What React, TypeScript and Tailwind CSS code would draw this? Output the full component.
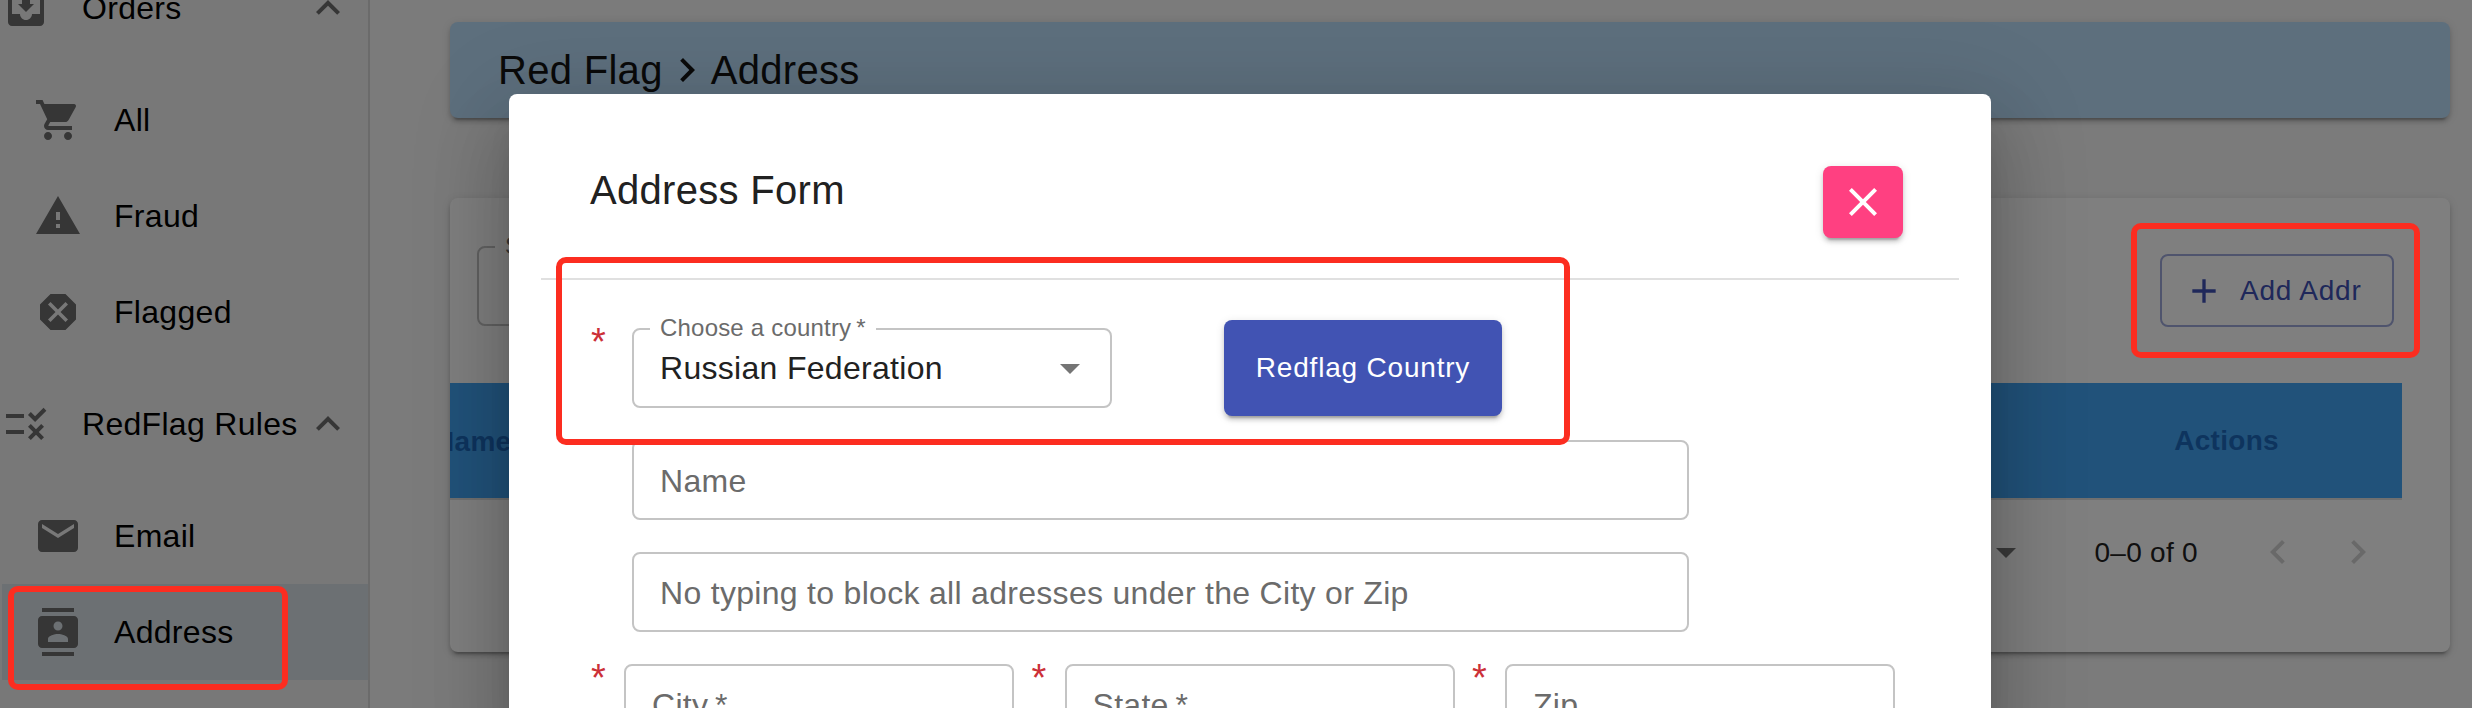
import type { ReactNode } from "react";
import type { IconType } from "react-icons";
import {
  MdAdd,
  MdArrowDropDown,
  MdClose,
  MdContacts,
  MdDangerous,
  MdEmail,
  MdExpandLess,
  MdKeyboardArrowLeft,
  MdKeyboardArrowRight,
  MdMoveToInbox,
  MdNavigateNext,
  MdRule,
  MdShoppingCart,
  MdWarning,
} from "react-icons/md";

const elevation =
  "shadow-[0_6px_2px_-4px_rgba(0,0,0,0.2),0_4px_4px_0_rgba(0,0,0,0.14),0_2px_10px_0_rgba(0,0,0,0.12)]";

type NavProps = {
  icon: IconType;
  label: string;
  selected?: boolean;
};

const NavGroup = ({ icon: Icon, label }: NavProps) => (
  <div className="flex items-center h-24 my-4 pl-0.5 shrink-0">
    <Icon className="size-12 shrink-0 text-[#6c6c6c]" />
    <span className="w-[222px] pl-8 whitespace-nowrap tracking-[0.3px]">
      {label}
    </span>
    <MdExpandLess className="size-12 ml-8 shrink-0 text-[#6c6c6c]" />
  </div>
);

const NavItem = ({ icon: Icon, label, selected }: NavProps) => (
  <div
    className={`${
      selected ? "bg-[#d9e1e7]" : ""
    } flex items-center h-24 ml-0.5 pl-8 shrink-0`}
  >
    <Icon className="size-12 shrink-0 text-[#6c6c6c]" />
    <span className="pl-8 tracking-[0.3px]">{label}</span>
  </div>
);

const Sidebar = () => (
  <aside className="w-[370px] shrink-0 flex flex-col border-r-2 border-[#d6d6d6] bg-[#f0f0f0] text-[32px] leading-12 text-black">
    <div className="-mt-14 flex flex-col">
      <NavGroup icon={MdMoveToInbox} label="Orders" />
      <NavItem icon={MdShoppingCart} label="All" />
      <NavItem icon={MdWarning} label="Fraud" />
      <NavItem icon={MdDangerous} label="Flagged" />
      <NavGroup icon={MdRule} label="RedFlag Rules" />
      <NavItem icon={MdEmail} label="Email" />
      <NavItem icon={MdContacts} label="Address" selected />
    </div>
  </aside>
);

const Star = ({ className }: { className: string }) => (
  <span
    className={`${className} shrink-0 h-10 -mt-1.5 pl-px text-[38px] leading-10 text-[#cc3038]`}
  >
    *
  </span>
);

const Field = ({
  className,
  children,
}: {
  className: string;
  children: ReactNode;
}) => (
  <div
    className={`${className} h-20 shrink-0 flex items-center border-2 border-[#c4c4c4] rounded-lg pt-0.5 pl-[26px] text-[32px] text-[#6b6b6b] tracking-[0.3px]`}
  >
    {children}
  </div>
);

const Main = () => (
  <main className="flex-1 bg-[#f6f6f6] pt-[22px] pl-20">
    <div
      className={`w-[2000px] h-24 flex items-center rounded-lg bg-[#bbdefb] pl-12 text-[40px] text-[#141414] tracking-[0.3px] ${elevation}`}
    >
      <span>Red Flag</span>
      <MdNavigateNext className="size-12" />
      <span>Address</span>
    </div>

    <section
      className={`w-[2000px] h-[454px] mt-20 rounded-lg bg-white overflow-hidden ${elevation}`}
    >
      <div className="flex justify-between h-[185px] pt-12 pl-[27px] pr-14">
        <div className="relative w-[600px] h-20 border-2 border-[#c4c4c4] rounded-lg">
          <span className="absolute left-4 -top-4 bg-white px-2.5 text-2xl leading-7 text-[#6b6b6b]">
            Search
          </span>
        </div>
        <button
          type="button"
          className="flex items-center w-[234px] h-[73px] mt-2 pl-[22px] border-2 border-[#9fa8da] rounded-lg text-[28px] text-[#3f51b5] tracking-[0.8px]"
        >
          <MdAdd className="size-10" />
          <span className="pl-4 whitespace-nowrap">Add Addr</span>
        </button>
      </div>

      <div className="flex items-center justify-between w-[1952px] h-[117px] bg-[#42a5f5] border-b-2 border-[#e0e0e0] text-[28px] font-bold text-[#1c69bc] tracking-[0.3px]">
        <span className="-ml-4 pt-0.5">Name</span>
        <span className="pr-[123px]">Actions</span>
      </div>

      <div className="flex items-center justify-end h-26 pr-[68px] text-[28px] text-[#212121]">
        <MdArrowDropDown className="size-12 text-[#757575]" />
        <span className="pl-16 pt-0.5 tracking-[0.3px]">0–0 of 0</span>
        <MdKeyboardArrowLeft className="size-12 ml-14 text-[#d2d2d2]" />
        <MdKeyboardArrowRight className="size-12 ml-8 text-[#d2d2d2]" />
      </div>
    </section>
  </main>
);

const AddressDialog = () => (
  <div className="absolute left-[509px] top-[94px] w-[1482px] h-[660px] rounded-lg bg-white shadow-[0_22px_30px_-14px_rgba(0,0,0,0.2),0_48px_76px_6px_rgba(0,0,0,0.14),0_18px_92px_16px_rgba(0,0,0,0.12)]">
    <div className="flex items-start justify-between mx-8 h-[186px] pl-[49px] pr-14 border-b-2 border-[#e0e0e0]">
      <h2 className="mt-[76px] text-[40px] leading-10 text-[#212121] tracking-[0.3px]">
        Address Form
      </h2>
      <button
        type="button"
        className={`flex items-center justify-center w-20 h-[72px] mt-[72px] rounded-lg bg-[#ff4081] text-white ${elevation}`}
      >
        <MdClose className="size-12" />
      </button>
    </div>

    <form className="flex flex-col gap-8 pt-12 pl-[81px]">
      <div className="flex items-start h-20">
        <Star className="w-[42px]" />
        <div className="relative w-[480px] h-20 flex items-center justify-between border-2 border-[#c4c4c4] rounded-lg pl-[26px] pr-4">
          <label className="absolute left-4 -top-4 w-[226px] bg-white pl-2.5 text-2xl leading-7 text-[#6b6b6b] tracking-[0.2px] whitespace-nowrap">
            Choose a country&#8201;*
          </label>
          <span className="text-[32px] text-[#212121] tracking-[0.3px]">
            Russian Federation
          </span>
          <MdArrowDropDown className="size-12 text-[#757575]" />
        </div>
        <button
          type="button"
          className={`w-[278px] h-24 -mt-2 ml-28 rounded-lg bg-[#4153b3] text-[28px] text-white tracking-[0.8px] whitespace-nowrap ${elevation}`}
        >
          Redflag Country
        </button>
      </div>

      <Field className="w-[1057px] ml-[42px]">Name</Field>
      <Field className="w-[1057px] ml-[42px]">
        No typing to block all adresses under the City or Zip
      </Field>

      <div className="flex items-start">
        {["City\u2009*", "State\u2009*", "Zip"].map((label) => (
          <div key={label} className="flex w-[440.5px] shrink-0">
            <Star className="w-[34px]" />
            <Field className="w-[390px]">{label}</Field>
          </div>
        ))}
      </div>
    </form>
  </div>
);

const Highlight = ({ className }: { className: string }) => (
  <div
    className={`${className} absolute border-6 border-[#fc2d20] rounded-[10px]`}
  />
);

export default function App() {
  return (
    <div className="relative flex w-[2472px] h-[708px] overflow-hidden font-['Liberation_Sans',Arial,sans-serif]">
      <Sidebar />
      <Main />
      <div className="absolute inset-0 bg-black/50" />
      <AddressDialog />
      <Highlight className="left-[8px] top-[586px] w-[280px] h-[104px]" />
      <Highlight className="left-[556px] top-[257px] w-[1014px] h-[188px]" />
      <Highlight className="left-[2131px] top-[223px] w-[289px] h-[135px]" />
    </div>
  );
}
